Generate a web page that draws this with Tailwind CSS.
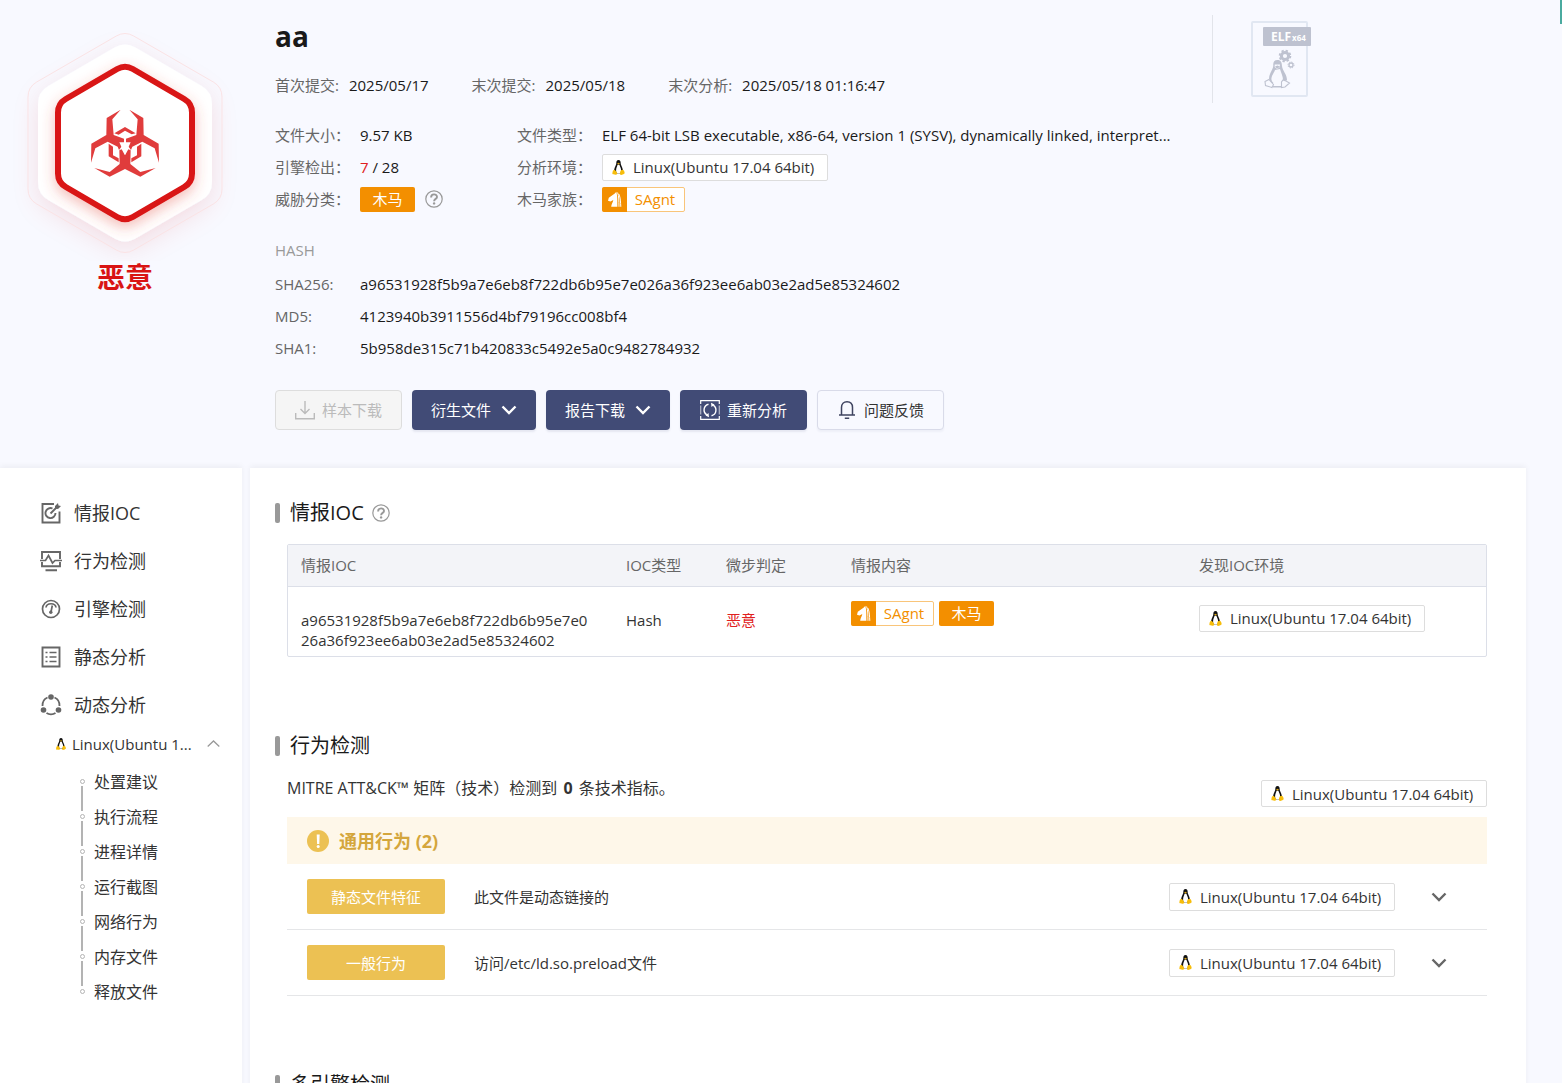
<!DOCTYPE html>
<html lang="zh-CN">
<head>
  <meta charset="UTF-8">
  <meta name="viewport" content="width=device-width, initial-scale=1.0">
  <title>aa - 样本分析报告</title>
  <script src="https://cdn.jsdelivr.net/npm/@tailwindcss/browser@4"></script>
</head>
<body class="relative min-h-screen bg-[#f8f9ff] font-['Open_Sans','Noto_Sans_CJK_SC',sans-serif] text-[15px] leading-5 text-[#1a1a1a]">

  <!-- Icon sprite -->
  <svg class="hidden" xmlns="http://www.w3.org/2000/svg">
    <symbol id="tux" viewBox="0 0 26 31">
      <path fill="#111" d="M13 0C9.500 0 8.300 3 8.500 6.500C8.700 10 5 13.500 4 20C3.700 22 4 26 6 28H20C22 26 22.300 22 22 20C21 13.500 17.300 10 17.500 6.500C17.700 3 16.500 0 13 0Z"/>
      <path fill="#fff" d="M11 10C10.500 13 8 16.500 8 21.500C8 26 10 28 13 28S18.500 26 18.500 21.500C18.500 16.500 15.500 13 15 10Z"/>
      <path fill="#d9a514" d="M10 7L13 5.500L16 7.200L13 9.800Z"/>
      <path fill="#f7bd0a" d="M3.500 20.500C5.500 19.500 8 23.500 10 26.500C11.500 29 9 31 6.500 30.500C4 30 1 30.500 .4 28.500C0 27 .8 26 1 24C1.200 22 2.300 21 3.500 20.500Z"/>
      <path fill="#f7bd0a" d="M22.500 20.500C20.500 19.500 17 21 16.500 25C16 28.500 16 31 18.500 31C21 31 22.500 29.500 24.500 28.500C26.500 27.500 25.500 26 25 24C24.600 22 23.700 21 22.500 20.500Z"/>
    </symbol>
    <symbol id="horse" viewBox="0 0 25 25">
      <path fill="#fff" d="M6.800 10.800L12.800 6.500L14.300 4.800L15 8C15.500 12 15.300 16 15.400 19.800H9.200C9.300 17 11 15.500 11.300 13L8.500 14.500L6 13.800Z"/>
      <path fill="none" stroke="#fff" stroke-width="1" d="M15.600 5.500C17 9.500 16.800 14 17 19.800M16.800 7C18.700 11 18.400 15 18.800 19.800"/>
    </symbol>
    <symbol id="help" viewBox="0 0 18 18">
      <circle cx="9" cy="9" r="8.200" fill="none" stroke="#999" stroke-width="1.200"/>
      <path fill="none" stroke="#999" stroke-width="1.900" d="M6.100 7.400C6.100 3.500 12 3.500 12 6.900C12 8.900 9.100 8.900 9.100 11.200"/>
      <circle cx="9.100" cy="13.400" r="1.200" fill="#999"/>
    </symbol>
    <symbol id="chevron" viewBox="0 0 16 16">
      <path fill="none" stroke="currentColor" stroke-width="2.400" d="M1.500 4.500L8 11L14.500 4.500"/>
    </symbol>
  </svg>

  <!-- Floating tab at the window edge -->
  <div class="absolute top-0 right-0 h-6 w-0.5 bg-[#4aaa9f]"></div>

  <header class="flex h-[468px]">
    <!-- Verdict -->
    <div class="w-[250px] shrink-0">
      <svg class="block h-[261px] w-[250px]" viewBox="0 0 250 261">
        <defs>
          <filter id="soft" x="-30%" y="-30%" width="160%" height="160%">
            <feDropShadow dx="0" dy="8" stdDeviation="13" flood-color="#d81414" flood-opacity=".11"/>
          </filter>
          <filter id="glow" x="-30%" y="-30%" width="160%" height="160%">
            <feDropShadow dx="0" dy="5" stdDeviation="7" flood-color="#e0483c" flood-opacity=".36"/>
          </filter>
        </defs>
        <path filter="url(#soft)" fill="#fff" d="M114.600 47.500Q125 41.500 135.400 47.500L201.600 86Q212 92 212 104V182Q212 194 201.600 200L135.400 238.500Q125 244.500 114.600 238.500L48.400 200Q38 194 38 182V104Q38 92 48.400 86Z"/>
        <path fill="none" stroke="#fbe3e5" d="M116.300 36Q125 31 133.700 36L213.300 82Q222 87 222 97V189Q222 199 213.300 204L133.700 250Q125 255 116.300 250L36.700 204Q28 199 28 189V97Q28 87 36.700 82Z"/>
        <path filter="url(#glow)" fill="#fff" stroke="#d91414" stroke-width="6" d="M117.200 69Q125 64.500 132.800 69L184.200 99Q192 103.500 192 112.500V173.500Q192 182.500 184.200 187L132.800 217Q125 221.500 117.200 217L65.800 187Q58 182.500 58 173.500V112.500Q58 103.500 65.800 99Z"/>
        <g transform="translate(75 95) scale(.3333)" fill="#e03c3c">
          <path d="M137 44L95 69L94 120L49 146L48 203L61 160L98 140L128 155L132 165L147 145V131L116 120L112 73Z"/>
          <path d="M163 44L205 69L206 120L251 146L252 203L239 160L202 140L172 155L168 165L153 145V131L184 120L188 73Z"/>
          <path d="M150 181L140 163L133 166L134 207L104 231L58 219L104 245L150 222L196 245L242 219L196 231L166 207L167 166L160 163Z"/>
          <path d="M118 115L150 96L182 115L170 118L150 107L131 119Z"/>
          <path d="M101 146L114 155V181L131 190V202L101 184Z"/>
          <path d="M199 146L186 155V181L169 190V202L199 184Z"/>
          <path fill="#fff" d="M133 142H167L150 179Z"/>
        </g>
      </svg>
      <p class="text-center text-[28px] leading-8 font-bold text-[#d91414]">恶意</p>
    </div>

    <!-- Sample info -->
    <div class="min-w-0 flex-1 pt-5 pl-[25px]">
      <h1 class="text-[28px] leading-8 font-bold">aa</h1>
      <div class="mt-[23px] flex gap-[43px]">
        <p><span class="mr-[10px] text-[#666]">首次提交:</span>2025/05/17</p>
        <p><span class="mr-[10px] text-[#666]">末次提交:</span>2025/05/18</p>
        <p><span class="mr-[10px] text-[#666]">末次分析:</span>2025/05/18 01:16:47</p>
      </div>

      <dl class="mt-6 grid grid-cols-[85px_157px_85px_1fr] auto-rows-[32px] items-center">
        <dt class="text-[#666]">文件大小：</dt>
        <dd>9.57 KB</dd>
        <dt class="text-[#666]">文件类型：</dt>
        <dd class="whitespace-nowrap">ELF 64-bit LSB executable, x86-64, version 1 (SYSV), dynamically linked, interpret...</dd>
        <dt class="text-[#666]">引擎检出：</dt>
        <dd><span class="text-[#e02020]">7</span> / 28</dd>
        <dt class="text-[#666]">分析环境：</dt>
        <dd class="flex">
          <span class="flex h-[27px] w-[226px] items-center gap-2 rounded-xs border border-[#ddd] bg-white px-[9px] text-[#333]"><svg class="h-[15px] w-[13px]"><use href="#tux"/></svg>Linux(Ubuntu 17.04 64bit)</span>
        </dd>
        <dt class="text-[#666]">威胁分类：</dt>
        <dd class="flex items-center gap-[10px]">
          <span class="flex h-[25px] w-[55px] items-center justify-center rounded-xs bg-[#f38f00] text-white">木马</span>
          <button type="button" aria-label="威胁分类说明"><svg class="block size-[18px]"><use href="#help"/></svg></button>
        </dd>
        <dt class="text-[#666]">木马家族：</dt>
        <dd class="flex">
          <span class="flex h-[25px] w-[83px] rounded-xs border border-[#f9c57a] bg-white text-[#f38f00]"><svg class="-m-px size-[25px] rounded-l-xs bg-[#f38f00]"><use href="#horse"/></svg><span class="flex-1 text-center leading-[23px]">SAgnt</span></span>
        </dd>
      </dl>

      <h2 class="mt-[25px] text-[#999]">HASH</h2>
      <dl class="mt-2 grid grid-cols-[85px_1fr] auto-rows-[32px] items-center">
        <dt class="text-[#666]">SHA256:</dt>
        <dd>a96531928f5b9a7e6eb8f722db6b95e7e026a36f923ee6ab03e2ad5e85324602</dd>
        <dt class="text-[#666]">MD5:</dt>
        <dd>4123940b3911556d4bf79196cc008bf4</dd>
        <dt class="text-[#666]">SHA1:</dt>
        <dd>5b958de315c71b420833c5492e5a0c9482784932</dd>
      </dl>

      <div class="mt-[26px] flex gap-[10px]">
        <button type="button" disabled class="flex h-10 items-center gap-[7px] rounded border border-[#ddd] bg-[#f5f5f5] px-[19px] text-[#bbb]">
          <svg class="size-5" viewBox="0 0 20 20" fill="none" stroke="#bbb" stroke-width="1.400"><path d="M10 1V13.500M5.500 9L10 13.500L14.500 9M.7 13V18.800H19.300V13"/></svg>
          样本下载
        </button>
        <button type="button" class="flex h-10 items-center gap-[10px] rounded bg-[#414b76] px-[19px] text-white shadow-[0_2px_2px_rgba(65,75,118,0.1)]">
          衍生文件
          <svg class="size-4"><use href="#chevron"/></svg>
        </button>
        <button type="button" class="flex h-10 items-center gap-[10px] rounded bg-[#414b76] px-[19px] text-white shadow-[0_2px_2px_rgba(65,75,118,0.1)]">
          报告下载
          <svg class="size-4"><use href="#chevron"/></svg>
        </button>
        <button type="button" class="flex h-10 items-center gap-[7px] rounded bg-[#414b76] px-5 text-white shadow-[0_2px_2px_rgba(65,75,118,0.1)]">
          <svg class="size-5" viewBox="0 0 20 20" fill="none" stroke="#fff" stroke-width="1.200"><path d="M.7 4V.7H19.300V4M.7 16V19.300H19.300V16"/><path stroke-opacity=".6" d="M.7 5.500V14.500M19.300 5.500V14.500"/><path stroke-width="1.400" d="M8.500 4.200C3.300 5.600 2.600 12 6.800 14.800M11.500 15.800C16.700 14.400 17.400 8 13.200 5.200"/><path fill="#fff" stroke="none" d="M11 2.800L14.500 4.600L11.500 7ZM9 17.200L5.500 15.400L8.500 13Z"/></svg>
          重新分析
        </button>
        <button type="button" class="flex h-10 items-center gap-[7px] rounded border border-[#d9dbe9] bg-[#f8f9ff] px-[19px] text-[#333] shadow-[0_2px_2px_rgba(65,75,118,0.05)]">
          <svg class="size-5" viewBox="0 0 20 20" fill="none" stroke="#3f4460" stroke-width="1.500"><path d="M4.500 14.500V7.500C4.500 3.700 6.800 1.700 10 1.700S15.500 3.700 15.500 7.500V14.500M2 14.900H18M7.800 18.200H12.200"/></svg>
          问题反馈
        </button>
      </div>
    </div>

    <!-- File type -->
    <div class="w-[350px] shrink-0 pt-[15px]">
      <div class="h-[88px] border-l border-[#e2e4ea] pt-1 pl-[38px]">
        <svg class="h-[80px] w-[62px]" viewBox="0 0 62 80" fill="#bec2d0">
          <rect x="1" y="3" width="55" height="74" rx="1" fill="#f8f9ff" stroke="#e1e7f2" stroke-width="2"/>
          <rect x="12" y="8" width="48" height="19" rx="1"/>
          <text x="20" y="22" font-size="12" font-weight="700" fill="#fff">ELF</text>
          <text x="41" y="22" font-size="8" font-weight="700" fill="#fff">x64</text>
          <circle cx="34" cy="37" r="3.600" fill="none" stroke="#bec2d0" stroke-width="3"/>
          <circle cx="34" cy="37" r="5.400" fill="none" stroke="#bec2d0" stroke-width="1.800" stroke-dasharray="2.300 1.940"/>
          <circle cx="40" cy="46" r="2" fill="none" stroke="#bec2d0" stroke-width="1.300"/>
          <circle cx="40" cy="46" r="3" fill="none" stroke="#bec2d0" stroke-width="1" stroke-dasharray="1.200 1.160"/>
          <path d="M26.500 41C23 41 22 43.500 22.300 46.500C22.500 50 18 54 18 60L20 64H32L36 61C36 55 31.500 52 31 47C30.800 43.500 30 41 26.500 41Z"/>
          <path fill="#f8f9ff" d="M24 51L29 50C30 54 32 57 32 61C31 66 22 67 20.500 61C20 57 23 54 24 51Z"/>
          <path fill="#f8f9ff" d="M23.700 45.500H29L28.500 48.500L26 50L23.700 48Z"/>
          <path d="M24 47.500L26.500 46.500L29 47.800L26 49.800Z"/>
          <path fill="#f8f9ff" stroke="#bec2d0" stroke-width="1.100" d="M18 60.500L22.500 65.500L21 68.500L14.500 66.500L14 62.500ZM32 61L35 62L38.500 64L34 68L30.500 68.500L30.500 63Z"/>
          <path d="M22 67H31V68.500H22Z"/>
        </svg>
      </div>
    </div>
  </header>

  <div class="flex gap-2 pr-9">
    <!-- Sidebar -->
    <nav class="w-[242px] shrink-0 bg-white pt-[21px] pb-20 text-[#333] shadow-[0_-2px_6px_rgba(0,0,0,0.05)]">
      <ul class="text-[18px] leading-6">
        <li><a href="#ioc" class="flex h-12 items-center gap-3 pl-10">
          <svg class="size-[22px]" viewBox="0 0 22 22" fill="none" stroke="#666" stroke-width="1.900"><path d="M14 2H2.500V20.500H19.500V9.500"/><path d="M12.500 6.500A5 5 0 1 0 15.500 11M10.500 11.500L17 5"/><path fill="#666" stroke="none" d="M15 6.500V4L18 1L18.500 3.500L21 4L18 7Z"/></svg>
          情报IOC</a></li>
        <li><a href="#behavior" class="flex h-12 items-center gap-3 pl-10">
          <svg class="size-[22px]" viewBox="0 0 22 22" fill="none" stroke="#666" stroke-width="1.900"><path d="M2 9V2H20V9M2 12V16.300H20V12M5.500 20.300H17"/><path stroke-width="1.700" d="M0 10.500H5.500L8.500 5.500L12.500 13L15 10.500H22"/></svg>
          行为检测</a></li>
        <li><a href="#engines" class="flex h-12 items-center gap-3 pl-10">
          <svg class="size-[22px]" viewBox="0 0 22 22" fill="none" stroke="#666" stroke-width="1.700"><circle cx="11" cy="11" r="8.500"/><path d="M6 9.500C6.500 4.500 15.500 4.500 16 9.500M12.300 7.500L11 14"/><circle cx="10.800" cy="14.300" r="1.700" fill="#666" stroke="none"/></svg>
          引擎检测</a></li>
        <li><a href="#static" class="flex h-12 items-center gap-3 pl-10">
          <svg class="size-[22px]" viewBox="0 0 22 22" fill="none" stroke="#666" stroke-width="1.900"><path d="M2.500 1.500H19.500V20.500H2.500Z"/><path stroke-width="1.500" d="M5.500 6.500H7.500M9.500 6.500H16.500M5.500 11H7.500M9.500 11H16.500M5.500 15.500H7.500M9.500 15.500H16.500"/></svg>
          静态分析</a></li>
        <li><a href="#dynamic" class="flex h-12 items-center gap-3 pl-10">
          <svg class="size-[22px]" viewBox="0 0 22 22" fill="none" stroke="#666" stroke-width="1.800"><path d="M7.500 3.500C4 5 2.300 8.500 2.500 12M14.500 3.500C18 5 19.700 8.500 19.500 12M6.500 19C9 20.700 13 20.700 15.500 19"/><g fill="#666" stroke="none"><circle cx="11" cy="3" r="2.800"/><circle cx="3.500" cy="16" r="2.800"/><circle cx="18.500" cy="16" r="2.800"/></g></svg>
          动态分析</a></li>
      </ul>
      <button type="button" class="flex h-[30px] w-full items-center pr-[22px] pl-[55px] text-left">
        <svg class="mr-[5px] h-3 w-3 shrink-0"><use href="#tux"/></svg>
        <span class="flex-1">Linux(Ubuntu 1...</span>
        <svg class="h-3 w-[13px]" viewBox="0 0 13 12" fill="none" stroke="#999" stroke-width="1.300"><path d="M.7 8.500L6.500 3L12.300 8.500"/></svg>
      </button>
      <ul class="pt-[5px] pl-20 text-base">
        <li class="relative"><span class="absolute top-[22px] left-px h-[25px] w-0.5 bg-[#b3b3b3]"></span><a href="#advice" class="flex h-[35px] items-center gap-[9px]"><i class="size-[5px] rounded-full border border-[#b3b3b3]"></i>处置建议</a></li>
        <li class="relative"><span class="absolute top-[22px] left-px h-[25px] w-0.5 bg-[#b3b3b3]"></span><a href="#flow" class="flex h-[35px] items-center gap-[9px]"><i class="size-[5px] rounded-full border border-[#b3b3b3]"></i>执行流程</a></li>
        <li class="relative"><span class="absolute top-[22px] left-px h-[25px] w-0.5 bg-[#b3b3b3]"></span><a href="#process" class="flex h-[35px] items-center gap-[9px]"><i class="size-[5px] rounded-full border border-[#b3b3b3]"></i>进程详情</a></li>
        <li class="relative"><span class="absolute top-[22px] left-px h-[25px] w-0.5 bg-[#b3b3b3]"></span><a href="#screenshots" class="flex h-[35px] items-center gap-[9px]"><i class="size-[5px] rounded-full border border-[#b3b3b3]"></i>运行截图</a></li>
        <li class="relative"><span class="absolute top-[22px] left-px h-[25px] w-0.5 bg-[#b3b3b3]"></span><a href="#network" class="flex h-[35px] items-center gap-[9px]"><i class="size-[5px] rounded-full border border-[#b3b3b3]"></i>网络行为</a></li>
        <li class="relative"><span class="absolute top-[22px] left-px h-[25px] w-0.5 bg-[#b3b3b3]"></span><a href="#memory" class="flex h-[35px] items-center gap-[9px]"><i class="size-[5px] rounded-full border border-[#b3b3b3]"></i>内存文件</a></li>
        <li><a href="#dropped" class="flex h-[35px] items-center gap-[9px]"><i class="size-[5px] rounded-full border border-[#b3b3b3]"></i>释放文件</a></li>
      </ul>
    </nav>

    <main class="min-w-0 flex-1 bg-white pt-[30px] pr-[39px] pb-4 pl-[25px] shadow-[0_-2px_6px_rgba(0,0,0,0.05)]">
      <!-- IOC -->
      <section id="ioc">
        <h2 class="flex h-[30px] items-center text-[20px]">
          <span class="mr-[10px] h-5 w-[5px] rounded-xs bg-[#999]"></span>情报IOC
          <button type="button" aria-label="情报IOC说明" class="ml-2"><svg class="block size-[18px]"><use href="#help"/></svg></button>
        </h2>
        <div class="mt-4 ml-3 overflow-hidden rounded-xs border border-[#dcdfe8]">
          <table class="w-full table-fixed text-left text-[#333]">
            <thead class="border-b border-[#dcdfe8] bg-[#f3f4f8] text-[#666]">
              <tr class="h-[41px]">
                <th class="w-[325px] pl-[13px] font-normal">情报IOC</th>
                <th class="w-[100px] pl-[13px] font-normal">IOC类型</th>
                <th class="w-[125px] pl-[13px] font-normal">微步判定</th>
                <th class="w-[348px] pl-[13px] font-normal">情报内容</th>
                <th class="pl-[13px] font-normal">发现IOC环境</th>
              </tr>
            </thead>
            <tbody>
              <tr class="h-[70px] align-top">
                <td class="pt-[23px] pl-[13px] break-all">a96531928f5b9a7e6eb8f722db6b95e7e0<br>26a36f923ee6ab03e2ad5e85324602</td>
                <td class="pt-[23px] pl-[13px]">Hash</td>
                <td class="pt-[23px] pl-[13px] text-[#e02020]">恶意</td>
                <td class="pt-[14px] pl-[13px]">
                  <div class="flex gap-[5px]">
                    <span class="flex h-[25px] w-[83px] rounded-xs border border-[#f9c57a] bg-white text-[#f38f00]"><svg class="-m-px size-[25px] rounded-l-xs bg-[#f38f00]"><use href="#horse"/></svg><span class="flex-1 text-center leading-[23px]">SAgnt</span></span>
                    <span class="flex h-[25px] w-[55px] items-center justify-center rounded-xs bg-[#f38f00] text-white">木马</span>
                  </div>
                </td>
                <td class="pt-[18px] pl-[13px]">
                  <div class="flex">
                    <span class="flex h-[27px] w-[226px] items-center gap-2 rounded-xs border border-[#ddd] bg-white px-[9px]"><svg class="h-[15px] w-[13px]"><use href="#tux"/></svg>Linux(Ubuntu 17.04 64bit)</span>
                  </div>
                </td>
              </tr>
            </tbody>
          </table>
        </div>
      </section>

      <!-- Behavior -->
      <section id="behavior" class="mt-[74px]">
        <h2 class="flex h-[30px] items-center text-[20px]">
          <span class="mr-[10px] h-5 w-[5px] rounded-xs bg-[#999]"></span>行为检测
        </h2>
        <div class="mt-[15px] ml-3 text-[#333]">
          <div class="flex items-start justify-between">
            <p class="text-base">MITRE ATT&amp;CK™ 矩阵（技术）检测到 <b class="mx-0.5">0</b> 条技术指标。</p>
            <span class="mt-1 flex h-[27px] w-[226px] items-center gap-2 rounded-xs border border-[#ddd] bg-white px-[9px]"><svg class="h-[15px] w-[13px]"><use href="#tux"/></svg>Linux(Ubuntu 17.04 64bit)</span>
          </div>

          <h3 class="mt-[10px] flex h-[47px] items-center gap-[10px] bg-[#fef7e9] pl-5 text-[18px] font-bold text-[#d4a63c]">
            <svg class="size-[22px]" viewBox="0 0 22 22"><circle cx="11" cy="11" r="11" fill="#ecc153"/><path fill="#fff" d="M9.700 4.500H12.700L12.300 14H10.100Z"/><circle cx="11.200" cy="16.500" r="1.500" fill="#fff"/></svg>
            通用行为 (2)
          </h3>
          <div class="flex h-[66px] items-center border-b border-[#e5e6e8] pr-10 pl-5">
            <span class="mr-[29px] flex h-[35px] w-[138px] items-center justify-center rounded-xs bg-[#ecc153] text-white">静态文件特征</span>
            <p class="flex-1">此文件是动态链接的</p>
            <span class="flex h-7 w-[226px] items-center gap-2 rounded-xs border border-[#ddd] bg-white px-[9px]"><svg class="h-[15px] w-[13px]"><use href="#tux"/></svg>Linux(Ubuntu 17.04 64bit)</span>
            <button type="button" aria-label="展开" class="ml-9 text-[#666]"><svg class="block size-4"><use href="#chevron"/></svg></button>
          </div>
          <div class="flex h-[66px] items-center border-b border-[#e5e6e8] pr-10 pl-5">
            <span class="mr-[29px] flex h-[35px] w-[138px] items-center justify-center rounded-xs bg-[#ecc153] text-white">一般行为</span>
            <p class="flex-1">访问/etc/ld.so.preload文件</p>
            <span class="flex h-7 w-[226px] items-center gap-2 rounded-xs border border-[#ddd] bg-white px-[9px]"><svg class="h-[15px] w-[13px]"><use href="#tux"/></svg>Linux(Ubuntu 17.04 64bit)</span>
            <button type="button" aria-label="展开" class="ml-9 text-[#666]"><svg class="block size-4"><use href="#chevron"/></svg></button>
          </div>
        </div>
      </section>

      <!-- Engines -->
      <section id="engines" class="mt-[74px]">
        <h2 class="flex h-[30px] items-center text-[20px]">
          <span class="mr-[10px] h-5 w-[5px] rounded-xs bg-[#999]"></span>多引擎检测
        </h2>
      </section>
    </main>
  </div>
</body>
</html>
